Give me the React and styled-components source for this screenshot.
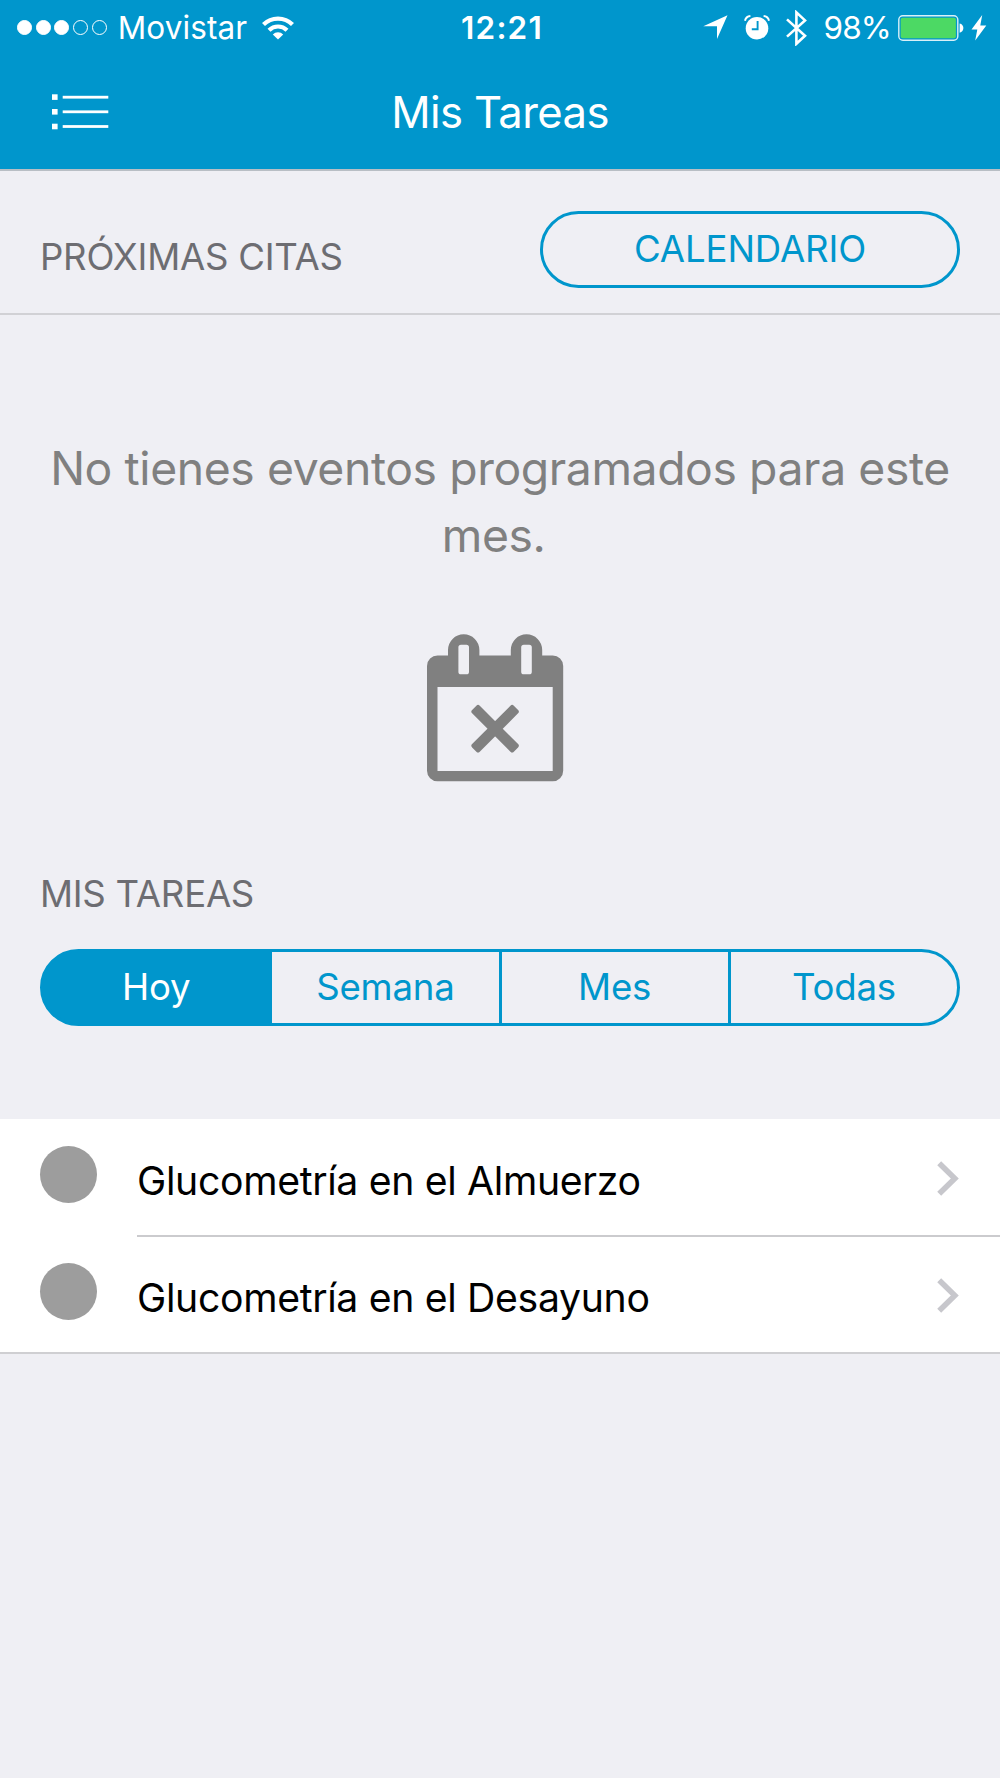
import React, { useState } from "react";
import styled, { createGlobalStyle } from "styled-components";

const tabs = ["Hoy", "Semana", "Mes", "Todas"];

const tasks = [
  { id: 1, name: "Glucometría en el Almuerzo" },
  { id: 2, name: "Glucometría en el Desayuno" },
];

const StatusBar = () => (
  <Status>
    <StatusLeft>
      <Signal>
        <Dot $on />
        <Dot $on />
        <Dot $on />
        <Dot />
        <Dot />
      </Signal>
      <Carrier>Movistar</Carrier>
      <svg width="32" height="24" viewBox="0 0 32 24">
        <g fill="none" stroke="#fff" strokeWidth="4.2">
          <path d="M1.5 8.6a20.5 20.5 0 0 1 29 0" />
          <path d="M7 14.2a12.8 12.8 0 0 1 18 0" />
        </g>
        <path d="M16 23.6l-5.2-5.2a7.4 7.4 0 0 1 10.4 0z" fill="#fff" />
      </svg>
    </StatusLeft>
    <Time>12:21</Time>
    <StatusRight>
      <svg width="25" height="25" viewBox="0 0 25 25">
        <path d="M24.5 0.3L14 24V11.2H0.3z" fill="#fff" />
      </svg>
      <AlarmIcon width="26" height="25" viewBox="0 0 26 25">
        <circle cx="13" cy="13.2" r="11.3" fill="#fff" />
        <path d="M13.6 6v8.2H7.8" fill="none" stroke="#0096cc" strokeWidth="1.9" />
        <g fill="none" stroke="#fff" strokeWidth="2">
          <path d="M1 5.8C1.6 3 3.6 1.2 6.4 1" />
          <path d="M25 5.8C24.4 3 22.4 1.2 19.6 1" />
        </g>
      </AlarmIcon>
      <BluetoothIcon width="21" height="36" viewBox="0 0 21 36">
        <path
          d="M1 9.4l18 16.4-8.6 8V2.4l8.6 8L1 26.6"
          fill="none"
          stroke="#fff"
          strokeWidth="2.6"
        />
      </BluetoothIcon>
      <Percent>98%</Percent>
      <svg width="66" height="26" viewBox="0 0 66 26">
        <rect x="0.8" y="0.8" width="59" height="24.4" rx="4" fill="none" stroke="#d8f0f8" strokeWidth="1.4" />
        <rect x="2.7" y="2.7" width="55.2" height="20.6" rx="2" fill="#4cd964" />
        <path d="M61.6 8.5c5 .8 5 8.4 0 9.2z" fill="#fff" />
      </svg>
      <BoltIcon width="16" height="26" viewBox="0 0 16 26">
        <path d="M11.2 0L0.5 14.6h5.8L4.2 25.6 15.3 10.6H9.3z" fill="#fff" />
      </BoltIcon>
    </StatusRight>
  </Status>
);

const App = () => {
  const [tab, setTab] = useState("Hoy");

  return (
    <>
      <GlobalStyle />
      <Header>
        <StatusBar />
        <NavBar>
          <MenuButton aria-label="Menú">
            <svg width="57" height="36" viewBox="0 0 57 36">
              <g fill="#fff">
                <rect y="0.3" width="5.6" height="5.6" />
                <rect y="15" width="5.6" height="5.6" />
                <rect y="29.7" width="5.6" height="5.6" />
                <rect x="10.7" y="1.8" width="45.6" height="2.8" />
                <rect x="10.7" y="16.4" width="45.6" height="2.8" />
                <rect x="10.7" y="31.1" width="45.6" height="2.8" />
              </g>
            </svg>
          </MenuButton>
          <Title>Mis Tareas</Title>
        </NavBar>
      </Header>

      <DatesHeader>
        <SectionTitle>PRÓXIMAS CITAS</SectionTitle>
        <CalendarButton>CALENDARIO</CalendarButton>
      </DatesHeader>

      <Empty>
        <Message>No tienes eventos programados para este mes.&nbsp;</Message>
        <svg width="137" height="148" viewBox="0 0 137 148">
          <g fill="#808080">
            <path
              fillRule="evenodd"
              d="M10.5 21.5H21V16a15.7 15.7 0 0 1 31.4 0v5.5h31.4V16a15.7 15.7 0 0 1 31.4 0v5.5h10.5a10.5 10.5 0 0 1 10.5 10.5v104.8a10.5 10.5 0 0 1-10.5 10.5H10.5A10.5 10.5 0 0 1 0 136.8V32a10.5 10.5 0 0 1 10.5-10.5zM10.5 53v84h115.2V53zM34 10.7a2.6 2.6 0 0 0-2.6 2.6v24.4a2.6 2.6 0 0 0 2.6 2.6h5.4a2.6 2.6 0 0 0 2.6-2.6V13.3a2.6 2.6 0 0 0-2.6-2.6zM96.8 10.7a2.6 2.6 0 0 0-2.6 2.6v24.4a2.6 2.6 0 0 0 2.6 2.6h5.4a2.6 2.6 0 0 0 2.6-2.6V13.3a2.6 2.6 0 0 0-2.6-2.6z"
            />
            <rect x="38.6" y="89.3" width="59" height="10.8" rx="2.4" transform="rotate(45 68.1 94.7)" />
            <rect x="38.6" y="89.3" width="59" height="10.8" rx="2.4" transform="rotate(-45 68.1 94.7)" />
          </g>
        </svg>
      </Empty>

      <TasksHeader>
        <SectionTitle>MIS TAREAS</SectionTitle>
        <Segmented>
          {tabs.map((name) => (
            <Segment key={name} $active={name === tab} onClick={() => setTab(name)}>
              {name}
            </Segment>
          ))}
        </Segmented>
      </TasksHeader>

      <List>
        {tasks.map((task) => (
          <Row key={task.id}>
            <Bullet />
            <RowBody>
              <span>{task.name}</span>
              <Chevron width="22" height="35" viewBox="0 0 22 35">
                <path d="M2.2 2.2l15.6 15.3L2.2 32.8" fill="none" stroke="#c7c7cc" strokeWidth="5.6" />
              </Chevron>
            </RowBody>
          </Row>
        ))}
      </List>
    </>
  );
};

export default App;

const GlobalStyle = createGlobalStyle`
  * {
    box-sizing: border-box;
  }

  body {
    margin: 0;
    min-height: 1778px;
    background-color: #efeff4;
    font-family: Inter, "Liberation Sans", sans-serif;
  }

  button {
    margin: 0;
    padding: 0;
    border: none;
    background: none;
    font-family: inherit;
  }

  svg {
    display: block;
    flex: none;
  }
`;

const Header = styled.header`
  height: 171px;
  background-color: #0096cc;
  border-bottom: 2px solid #b8bec4;
  color: #fff;
`;

const Status = styled.div`
  display: grid;
  grid-template-columns: 1fr auto 1fr;
  align-items: center;
  height: 55px;
  padding: 0 13px 0 17px;
  font-size: 31.5px;
  line-height: 40px;
`;

const StatusLeft = styled.div`
  display: flex;
  align-items: center;
`;

const StatusRight = styled.div`
  display: flex;
  align-items: center;
  justify-content: flex-end;
`;

const Signal = styled.div`
  display: flex;
  gap: 3.7px;
`;

const Dot = styled.span`
  width: 15px;
  height: 15px;
  border-radius: 50%;
  border: 1px solid #fff;
  background-color: ${(props) => (props.$on ? "#fff" : "transparent")};
`;

const Carrier = styled.span`
  margin: 0 15px 0 11px;
  letter-spacing: 0.1px;
`;

const Time = styled.span`
  font-weight: 600;
  letter-spacing: 1.2px;
`;

const AlarmIcon = styled.svg`
  margin-left: 16px;
`;

const BluetoothIcon = styled.svg`
  margin-left: 16px;
`;

const Percent = styled.span`
  margin: 0 7px 0 16px;
  letter-spacing: -0.8px;
`;

const BoltIcon = styled.svg`
  margin-left: 7px;
`;

const NavBar = styled.div`
  display: grid;
  grid-template-columns: 1fr auto 1fr;
  align-items: center;
  height: 114px;
  padding: 0 52px;
`;

const MenuButton = styled.button`
  justify-self: start;
`;

const Title = styled.h1`
  margin: 2px 0 0;
  font-size: 43.6px;
  font-weight: 400;
  line-height: 56px;
  letter-spacing: -0.6px;
`;

const SectionTitle = styled.h2`
  margin: 0;
  color: #6d6d72;
  font-size: 36.6px;
  font-weight: 400;
  line-height: 44px;
  letter-spacing: -0.25px;
`;

const DatesHeader = styled.section`
  display: flex;
  align-items: flex-end;
  justify-content: space-between;
  height: 144px;
  padding: 0 40px 25px;
  border-bottom: 2px solid #d1d1d5;

  ${SectionTitle} {
    margin-bottom: 9px;
  }
`;

const CalendarButton = styled.button`
  width: 420px;
  height: 77px;
  padding-bottom: 2px;
  border: 3px solid #0096cc;
  border-radius: 39px;
  color: #0096cc;
  font-size: 36.6px;
  letter-spacing: -0.1px;
`;

const Empty = styled.section`
  display: flex;
  flex-direction: column;
  align-items: center;
  height: 557px;
  padding: 120px 40px 0;

  svg {
    margin: 66px 10px 0 0;
  }
`;

const Message = styled.p`
  margin: 0;
  color: #808080;
  font-size: 46.3px;
  line-height: 66.7px;
  letter-spacing: -0.4px;
  text-align: center;
`;

const TasksHeader = styled.section`
  height: 247px;
  padding: 0 40px;
`;

const Segmented = styled.div`
  display: flex;
  height: 77px;
  margin-top: 33px;
`;

// neighbouring segments share one border line
const Segment = styled.button`
  flex: 1;
  padding-bottom: 2px;
  border: 3px solid #0096cc;
  background-color: ${(props) => (props.$active ? "#0096cc" : "transparent")};
  color: ${(props) => (props.$active ? "#fff" : "#0096cc")};
  font-size: 36.6px;
  letter-spacing: -0.2px;

  & + & {
    margin-left: -3px;
  }

  &:first-child {
    border-radius: 39px 0 0 39px;
  }

  &:last-child {
    border-radius: 0 39px 39px 0;
  }
`;

const List = styled.ul`
  height: 235px;
  margin: 0;
  padding: 0;
  list-style: none;
  background-color: #fff;
  border-bottom: 2px solid #cfcfd2;
`;

const Row = styled.li`
  display: flex;
  height: 117px;
  padding-left: 40px;
`;

const Bullet = styled.span`
  width: 57px;
  height: 57px;
  margin: 27px 40px 0 0;
  border-radius: 50%;
  background-color: #9d9d9d;
`;

const RowBody = styled.div`
  flex: 1;
  display: flex;
  align-items: center;
  justify-content: space-between;
  padding: 6px 41px 0 0;
  color: #000;
  font-size: 39.2px;
  letter-spacing: -0.33px;

  ${Row}:not(:last-child) & {
    margin-bottom: -1px;
    border-bottom: 2px solid #cbcbce;
  }
`;

const Chevron = styled.svg`
  margin-bottom: 4px;
`;
